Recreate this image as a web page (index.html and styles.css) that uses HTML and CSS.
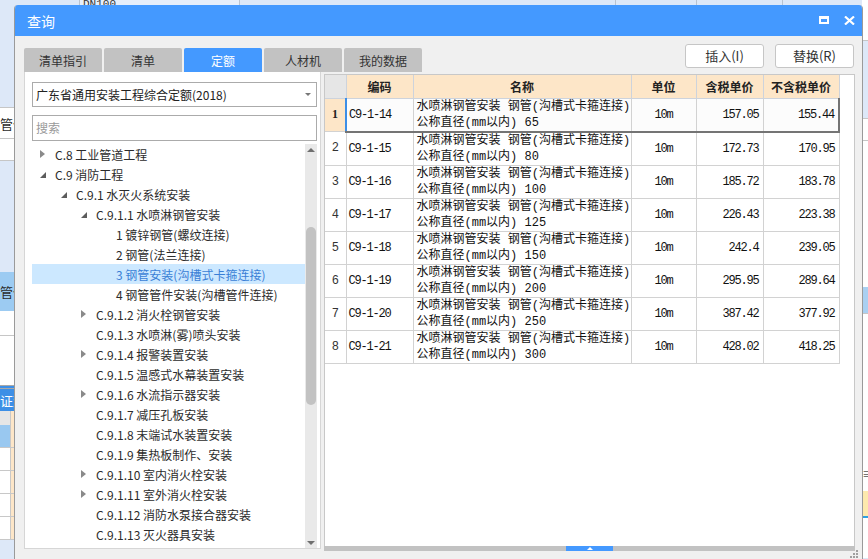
FILE: index.html
```html
<!DOCTYPE html>
<html lang="zh">
<head>
<meta charset="utf-8">
<title>查询</title>
<link rel="stylesheet" href="styles.css">
</head>
<body>
<div class="desktop">
  <div class="strip strip-left">
    <div class="lb lb-blue lb-h109"></div>
    <div class="lb lb-white lb-line lb-h33 lb-text">管件</div>
    <div class="lb lb-white lb-line lb-h22"></div>
    <div class="lb lb-blue lb-line lb-h110"></div>
    <div class="lb lb-sel lb-h39 lb-text">管件</div>
    <div class="lb lb-white lb-h24"></div>
    <div class="lb lb-white lb-line lb-h50"></div>
    <div class="lb lb-bar lb-h26 lb-text">证观</div>
    <div class="lb lb-head lb-h14"><span class="lb-peach"></span></div>
    <div class="lb lb-grid lb-selrow"><span class="lb-peach"></span></div>
    <div class="lb lb-grid"><span class="lb-peach"></span></div>
    <div class="lb lb-grid"><span class="lb-peach"></span></div>
    <div class="lb lb-grid"><span class="lb-peach"></span></div>
    <div class="lb lb-grid"><span class="lb-peach"></span></div>
  </div>
  <div class="bg-mid">
    <div class="mid-top">
      <span class="mc mc-a"></span>
      <span class="mc mc-b">DN100</span>
      <span class="mc mc-c"></span>
      <span class="mc mc-d"></span>
      <span class="mc mc-e"></span>
      <span class="mc mc-f"></span>
    </div>
  </div>
  <div class="strip strip-right">
    <div class="lb lb-white lb-h40"></div>
    <div class="lb lb-blue lb-line lb-h78"></div>
    <div class="lb lb-white lb-line lb-h22"></div>
    <div class="lb lb-white lb-line lb-h147"></div>
    <div class="lb lb-ltblue lb-h26"></div>
    <div class="lb lb-white lb-line lb-h143"></div>
    <div class="lb lb-white lb-h35 lb-mark">≡</div>
    <div class="lb lb-yellow lb-h27"></div>
    <div class="lb lb-white lb-h40"></div>
  </div>
</div>

<div class="dialog">
  <div class="titlebar">
    <span class="title">查询</span>
    <div class="win-btns">
      <span class="btn-max"></span>
      <svg class="btn-close" width="11" height="9" viewBox="0 0 11 9"><path d="M1 0.5 L10 8.5 M10 0.5 L1 8.5" stroke="#fff" stroke-width="2.2" fill="none"/></svg>
    </div>
  </div>
  <div class="dbody">
    <div class="toprow">
      <div class="tabs">
        <span class="tab">清单指引</span>
        <span class="tab">清单</span>
        <span class="tab active">定额</span>
        <span class="tab">人材机</span>
        <span class="tab">我的数据</span>
      </div>
      <div class="actions">
        <button class="act">插入(I)</button>
        <button class="act">替换(R)</button>
      </div>
    </div>
    <div class="main">
      <div class="leftpanel">
        <div class="select">广东省通用安装工程综合定额(2018)<span class="caret"></span></div>
        <div class="search">搜索</div>
        <div class="treewrap">
          <div class="tree">
            <div class="node l0"><span class="arr col"></span>C.8 工业管道工程</div>
            <div class="node l0"><span class="arr exp"></span>C.9 消防工程</div>
            <div class="node l1"><span class="arr exp"></span>C.9.1 水灭火系统安装</div>
            <div class="node l2"><span class="arr exp"></span>C.9.1.1 水喷淋钢管安装</div>
            <div class="node l3"><span class="arr"></span>1 镀锌钢管(螺纹连接)</div>
            <div class="node l3"><span class="arr"></span>2 钢管(法兰连接)</div>
            <div class="node l3 sel"><span class="arr"></span>3 钢管安装(沟槽式卡箍连接)</div>
            <div class="node l3"><span class="arr"></span>4 钢管管件安装(沟槽管件连接)</div>
            <div class="node l2"><span class="arr col"></span>C.9.1.2 消火栓钢管安装</div>
            <div class="node l2"><span class="arr"></span>C.9.1.3 水喷淋(雾)喷头安装</div>
            <div class="node l2"><span class="arr col"></span>C.9.1.4 报警装置安装</div>
            <div class="node l2"><span class="arr"></span>C.9.1.5 温感式水幕装置安装</div>
            <div class="node l2"><span class="arr col"></span>C.9.1.6 水流指示器安装</div>
            <div class="node l2"><span class="arr"></span>C.9.1.7 减压孔板安装</div>
            <div class="node l2"><span class="arr"></span>C.9.1.8 末端试水装置安装</div>
            <div class="node l2"><span class="arr"></span>C.9.1.9 集热板制作、安装</div>
            <div class="node l2"><span class="arr col"></span>C.9.1.10 室内消火栓安装</div>
            <div class="node l2"><span class="arr col"></span>C.9.1.11 室外消火栓安装</div>
            <div class="node l2"><span class="arr"></span>C.9.1.12 消防水泵接合器安装</div>
            <div class="node l2"><span class="arr"></span>C.9.1.13 灭火器具安装</div>
            <div class="node l2"><span class="arr"></span>C.9.1.14 大空间智能型主动喷水灭火</div>
          </div>
          <div class="vscroll">
            <span class="sc-up"></span>
            <span class="sc-thumb"></span>
            <span class="sc-down"></span>
          </div>
        </div>
      </div>
      <div class="rightpanel">
        <div class="tablearea">
          <table class="grid">
            <colgroup>
              <col class="c-no"><col class="c-code"><col class="c-name"><col class="c-unit"><col class="c-tax"><col class="c-notax">
            </colgroup>
            <thead>
              <tr><th class="h-no"></th><th>编码</th><th>名称</th><th>单位</th><th>含税单价</th><th>不含税单价</th></tr>
            </thead>
            <tbody>
              <tr class="cur"><td class="no no1">1</td><td class="code">C9-1-14</td><td class="name">水喷淋钢管安装 钢管(沟槽式卡箍连接)<br>公称直径(mm以内) 65</td><td class="unit">10m</td><td class="num">157.05</td><td class="num last">155.44</td></tr>
              <tr><td class="no">2</td><td class="code">C9-1-15</td><td class="name">水喷淋钢管安装 钢管(沟槽式卡箍连接)<br>公称直径(mm以内) 80</td><td class="unit">10m</td><td class="num">172.73</td><td class="num">170.95</td></tr>
              <tr><td class="no">3</td><td class="code">C9-1-16</td><td class="name">水喷淋钢管安装 钢管(沟槽式卡箍连接)<br>公称直径(mm以内) 100</td><td class="unit">10m</td><td class="num">185.72</td><td class="num">183.78</td></tr>
              <tr><td class="no">4</td><td class="code">C9-1-17</td><td class="name">水喷淋钢管安装 钢管(沟槽式卡箍连接)<br>公称直径(mm以内) 125</td><td class="unit">10m</td><td class="num">226.43</td><td class="num">223.38</td></tr>
              <tr><td class="no">5</td><td class="code">C9-1-18</td><td class="name">水喷淋钢管安装 钢管(沟槽式卡箍连接)<br>公称直径(mm以内) 150</td><td class="unit">10m</td><td class="num">242.4</td><td class="num">239.05</td></tr>
              <tr><td class="no">6</td><td class="code">C9-1-19</td><td class="name">水喷淋钢管安装 钢管(沟槽式卡箍连接)<br>公称直径(mm以内) 200</td><td class="unit">10m</td><td class="num">295.95</td><td class="num">289.64</td></tr>
              <tr><td class="no">7</td><td class="code">C9-1-20</td><td class="name">水喷淋钢管安装 钢管(沟槽式卡箍连接)<br>公称直径(mm以内) 250</td><td class="unit">10m</td><td class="num">387.42</td><td class="num">377.92</td></tr>
              <tr><td class="no">8</td><td class="code">C9-1-21</td><td class="name">水喷淋钢管安装 钢管(沟槽式卡箍连接)<br>公称直径(mm以内) 300</td><td class="unit">10m</td><td class="num">428.02</td><td class="num">418.25</td></tr>
            </tbody>
          </table>
        </div>
        <div class="splitter"><span class="handle"><span class="handle-arrow"></span></span></div>
      </div>
    </div>
  </div>
  <svg class="grip" width="8" height="8" viewBox="0 0 8 8">
    <rect x="6" y="0" width="2" height="2" fill="#a0a0a0"/>
    <rect x="3" y="3" width="2" height="2" fill="#a0a0a0"/>
    <rect x="6" y="3" width="2" height="2" fill="#a0a0a0"/>
    <rect x="0" y="6" width="2" height="2" fill="#a0a0a0"/>
    <rect x="3" y="6" width="2" height="2" fill="#a0a0a0"/>
    <rect x="6" y="6" width="2" height="2" fill="#a0a0a0"/>
  </svg>
</div>
</body>
</html>
```

FILE: styles.css
```css
* { box-sizing: border-box; }
html, body { margin: 0; padding: 0; }
body {
  width: 868px;
  height: 559px;
  overflow: hidden;
  position: relative;
  font-family: "Noto Sans CJK SC", "Microsoft YaHei", sans-serif;
  font-size: 12px;
  color: #2b2b2b;
  background: #dde8f8;
}

/* ---------- background application ---------- */
.desktop {
  display: flex;
  height: 559px;
}
.strip {
  display: flex;
  flex-direction: column;
  overflow: hidden;
}
.strip-left { width: 14px; }
.strip-right { width: 6px; }
.bg-mid { flex: 1; background: #dde8f8; }
.mid-top { display: flex; height: 20px; }
.mc { border-right: 1px solid #b9c3d0; height: 20px; }
.mc-a { width: 66px; }
.mc-b { width: 160px; background: #e6eefa; font-family: "Liberation Mono", monospace; font-size: 11px; line-height: 8px; padding-left: 3px; color: #333; overflow: hidden; }
.mc-c { width: 376px; }
.mc-d { width: 81px; }
.mc-e { width: 86px; }
.mc-f { flex: 1; border-right: 0; }

.lb { flex: none; width: 100%; overflow: hidden; white-space: nowrap; position: relative; }
.lb-blue { background: #dde8f8; }
.lb-ltblue { background: #a9d0f2; }
.lb-white { background: #ffffff; }
.lb-yellow { background: #fde9ad; border-bottom: 2px solid #2ea0df; }
.lb-line { border-top: 1px solid #c6c6c6; }
.lb-sel { background: #9ccbf2; }
.lb-bar { background: #3d8fe6; color: #fff; border-top: 4px double #a8a8a8; }
.lb-head { background: #e6e6e6; }
.lb-grid { height: 23px; background: #fff; border-bottom: 1px solid #c8c8c8; }
.lb-selrow { background: #99c8f0; }
.lb-peach { position: absolute; left: 10px; top: 0; bottom: 0; width: 4px; background: #fde6c8; border-left: 1px solid #c8c8c8; }
.lb-text { font-size: 13px; display: flex; align-items: center; }
.lb-mark { font-size: 12px; color: #555; display: flex; align-items: center; }
.lb-h14 { height: 14px; }
.lb-h22 { height: 22px; }
.lb-h24 { height: 24px; }
.lb-h26 { height: 26px; }
.lb-h27 { height: 27px; }
.lb-h33 { height: 31px; }
.lb-h35 { height: 35px; }
.lb-h39 { height: 39px; }
.lb-h40 { height: 40px; }
.lb-h50 { height: 50px; }
.lb-h78 { height: 78px; }
.lb-h109 { height: 107px; }
.lb-h110 { height: 112px; }
.lb-h143 { height: 143px; }
.lb-h147 { height: 147px; }

/* ---------- dialog window ---------- */
.dialog {
  position: absolute;
  left: 14px;
  top: 5px;
  width: 849px;
  height: 558px;
  background: #f0f0f0;
  border: 1px solid #9a9a9a;
  border-top: 0;
  border-radius: 4px 4px 0 0;
  overflow: hidden;
  display: flex;
  flex-direction: column;
}
.titlebar {
  height: 31px;
  flex: none;
  background: #4499ff;
  display: flex;
  align-items: center;
  padding: 0 7px 0 12px;
}
.title {
  color: #fff;
  font-size: 14px;
  line-height: 31px;
  padding-top: 1px;
}
.win-btns {
  margin-left: auto;
  display: flex;
  align-items: center;
  gap: 15px;
  margin-top: -1px;
}
.btn-max {
  width: 10px;
  height: 8px;
  border: 2px solid #fff;
  border-top-width: 3px;
}
.btn-close { display: block; }

.dbody {
  flex: 1;
  display: flex;
  flex-direction: column;
  padding: 8px 6px 0 9px;
}
.toprow {
  height: 28px;
  flex: none;
  display: flex;
  justify-content: space-between;
  align-items: flex-start;
}
.tabs {
  display: flex;
  gap: 2px;
  margin-top: 4px;
}
.tab {
  width: 78px;
  height: 24px;
  background: #c2c2c2;
  border-radius: 2px 2px 0 0;
  color: #333;
  font-size: 12px;
  display: flex;
  align-items: center;
  justify-content: center;
}
.tab.active {
  background: #4499ff;
  color: #fff;
}
.actions {
  display: flex;
  gap: 11px;
  margin-right: 2px;
}
.act {
  width: 79px;
  height: 24px;
  background: #fff;
  border: 1px solid #c6c6c6;
  border-radius: 3px;
  font-family: "Noto Sans CJK SC", sans-serif;
  font-size: 13px;
  color: #333;
  padding: 0;
  line-height: 22px;
}

.main {
  display: flex;
  height: 479px;
  flex: none;
}
.leftpanel {
  width: 297px;
  height: 477px;
  background: #fff;
  border: 1px solid #d6d6d6;
  border-top: 0;
  padding: 10px 3px 0 7px;
  display: flex;
  flex-direction: column;
}
.select {
  height: 25px;
  flex: none;
  border: 1px solid #ababab;
  padding-left: 3px;
  line-height: 23px;
  font-size: 12px;
  color: #222;
  position: relative;
}
.caret {
  position: absolute;
  right: 5px;
  top: 10px;
  width: 0;
  height: 0;
  border-left: 3px solid transparent;
  border-right: 3px solid transparent;
  border-top: 3px solid #777;
}
.search {
  height: 26px;
  flex: none;
  margin-top: 8px;
  border: 1px solid #ababab;
  padding-left: 3px;
  line-height: 24px;
  color: #9a9a9a;
  font-size: 12px;
}
.treewrap {
  flex: 1;
  min-height: 0;
  margin-top: 3px;
  display: flex;
}
.tree {
  flex: 1;
  overflow: hidden;
  padding-top: 0;
}
.node {
  height: 20px;
  display: flex;
  align-items: center;
  white-space: nowrap;
  font-size: 12px;
  color: #2b2b2b;
}
.node.l0 { padding-left: 8px; }
.node.l1 { padding-left: 29px; }
.node.l2 { padding-left: 49px; }
.node.l3 { padding-left: 69px; }
.node.sel { background: #cce8ff; color: #3a7fd6; }
.arr {
  flex: none;
  width: 15px;
  height: 20px;
  position: relative;
}
.arr.col::before {
  content: "";
  position: absolute;
  left: 0;
  top: 6px;
  border-left: 5px solid #8a8a8a;
  border-top: 4px solid transparent;
  border-bottom: 4px solid transparent;
}
.arr.exp::before {
  content: "";
  position: absolute;
  left: 0;
  top: 8px;
  border-right: 6px solid #5c5c5c;
  border-top: 6px solid transparent;
}
.vscroll {
  width: 12px;
  flex: none;
  background: #e9e9e9;
  display: flex;
  flex-direction: column;
  align-items: center;
}
.sc-up {
  margin-top: 4px;
  width: 0;
  height: 0;
  border-left: 4px solid transparent;
  border-right: 4px solid transparent;
  border-bottom: 4px solid #6f6f6f;
}
.sc-thumb {
  margin-top: 75px;
  width: 10px;
  height: 178px;
  background: #c2c2c2;
  border-radius: 5px;
}
.sc-down {
  margin-top: auto;
  margin-bottom: 3px;
  width: 0;
  height: 0;
  border-left: 4px solid transparent;
  border-right: 4px solid transparent;
  border-top: 4px solid #6f6f6f;
}

.rightpanel {
  width: 531px;
  margin-left: 3px;
  margin-top: 2px;
  display: flex;
  flex-direction: column;
  height: 477px;
}
.tablearea {
  flex: 1;
  background: #fff;
  border: 1px solid #c8c8c8;
  border-bottom: 0;
  overflow: hidden;
}
.splitter {
  height: 5px;
  flex: none;
  background: #c2c2c2;
  display: flex;
  justify-content: center;
}
.handle {
  width: 47px;
  height: 5px;
  background: #4499ff;
  display: flex;
  justify-content: center;
  align-items: center;
}
.handle-arrow {
  width: 0;
  height: 0;
  border-left: 3px solid transparent;
  border-right: 3px solid transparent;
  border-bottom: 3px solid #fff;
}

.grid {
  table-layout: fixed;
  border-collapse: collapse;
  width: 514px;
}
.c-no { width: 21px; }
.c-code { width: 67px; }
.c-name { width: 218px; }
.c-unit { width: 65px; }
.c-tax { width: 67px; }
.c-notax { width: 76px; }
.grid th {
  height: 23px;
  background: #fde6c8;
  border: 1px solid #cdd3dc;
  border-top: 0;
  font-size: 12px;
  font-weight: bold;
  color: #222;
  padding: 0;
  text-align: center;
}
.grid th.h-no { background: #e6e6e6; border-left: 0; }
.grid td {
  height: 33px;
  border: 1px solid #d2d2d2;
  padding: 0;
  vertical-align: middle;
  white-space: nowrap;
  overflow: hidden;
  color: #111;
}
.grid td.no {
  text-align: center;
  font-family: "Liberation Mono", monospace;
  font-size: 12px;
  border-left: 0;
  color: #333;
}
.grid td.no1 {
  background: #fde6c8;
  font-family: "Liberation Serif", serif;
  font-weight: bold;
  color: #222;
}
.grid td.code {
  font-family: "Liberation Mono", monospace;
  font-size: 12px;
  letter-spacing: -1.2px;
  padding-left: 2px;
}
.grid td.name {
  font-family: "Liberation Mono", "Noto Sans CJK SC", monospace;
  font-size: 12px;
  line-height: 16px;
  padding-left: 3px;
}
.grid td.unit {
  font-family: "Liberation Mono", monospace;
  font-size: 12px;
  letter-spacing: -1.2px;
  text-align: center;
}
.grid td.num {
  font-family: "Liberation Mono", monospace;
  font-size: 12px;
  letter-spacing: -1.2px;
  text-align: right;
  padding-right: 4px;
}
.grid tr.cur td { background: #fcfcfc; }
.grid tr.cur td.no1 { background: #fde6c8; }
.grid tr.cur td:not(.no) { border-bottom: 2px solid #747474; }
.grid tr.cur td.code { border-left: 2px solid #3c8ee6; }
.grid tr.cur td.last { border-right: 2px solid #747474; }

.grip {
  position: absolute;
  right: 4px;
  bottom: 4px;
}
```
